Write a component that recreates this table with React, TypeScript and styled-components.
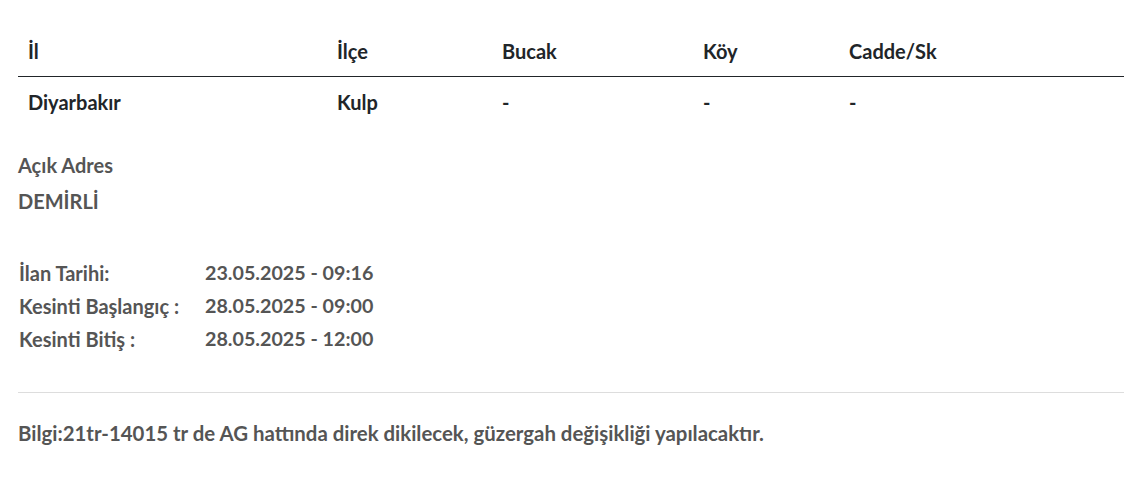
import React from "react";
import styled, { createGlobalStyle } from "styled-components";

const GlobalStyle = createGlobalStyle`
  html, body { margin: 0; padding: 0; background: #fff; }
  body { font-family: Lato, "Noto Sans", sans-serif; color: #212529; }
  *, *::before, *::after { box-sizing: border-box; }
`;

const Page = styled.div`
  padding: 22px 18px 0;
`;

const Table = styled.table`
  width: 100%;
  table-layout: fixed;
  border-collapse: collapse;
  font-size: 20px;
  font-weight: 700;
  color: #212529;
`;

const Th = styled.th<{ $w?: number }>`
  text-align: left;
  padding: 14px 10px 10px;
  line-height: 30px;
  border-bottom: 1px solid #212529;
  width: ${(p) => (p.$w ? `${p.$w}px` : "auto")};
`;

const Td = styled.td`
  padding: 10px 10px;
  line-height: 30px;
`;

const Section = styled.div`
  margin-top: 20px;
  color: #555;
  font-weight: 700;
  font-size: 20px;
`;

const Line = styled.div`
  line-height: 36px;
`;

const Dates = styled.div`
  margin-top: 39px;
  display: grid;
  grid-template-columns: 186px auto;
  row-gap: 3px;
  color: #555;
  font-weight: 700;
  font-size: 20px;
  line-height: 30px;
  padding-left: 1px;
`;

const Value = styled.span`
  font-size: 19.7px;
`;

const Divider = styled.hr`
  margin: 38px 0 0;
  border: 0;
  border-top: 1px solid #ddd;
`;

const Info = styled.p`
  margin: 25px 0 0;
  color: #555;
  font-weight: 700;
  font-size: 20.4px;
  line-height: 30px;
`;

export default function App() {
  const cols = [
    { h: "İl", v: "Diyarbakır", w: 309 },
    { h: "İlçe", v: "Kulp", w: 165 },
    { h: "Bucak", v: "-", w: 201 },
    { h: "Köy", v: "-", w: 146 },
    { h: "Cadde/Sk", v: "-" },
  ];
  return (
    <>
      <GlobalStyle />
      <Page>
        <Table>
          <thead>
            <tr>
              {cols.map((c) => (
                <Th key={c.h} $w={c.w}>{c.h}</Th>
              ))}
            </tr>
          </thead>
          <tbody>
            <tr>
              {cols.map((c) => (
                <Td key={c.h}>{c.v}</Td>
              ))}
            </tr>
          </tbody>
        </Table>
        <Section>
          <Line>Açık Adres</Line>
          <Line>DEMİRLİ</Line>
        </Section>
        <Dates>
          <span>İlan Tarihi:</span>
          <Value>23.05.2025 - 09:16</Value>
          <span>Kesinti Başlangıç :</span>
          <Value>28.05.2025 - 09:00</Value>
          <span>Kesinti Bitiş :</span>
          <Value>28.05.2025 - 12:00</Value>
        </Dates>
        <Divider />
        <Info>
          Bilgi:21tr-14015 tr de AG hattında direk dikilecek, güzergah değişikliği yapılacaktır.
        </Info>
      </Page>
    </>
  );
}
